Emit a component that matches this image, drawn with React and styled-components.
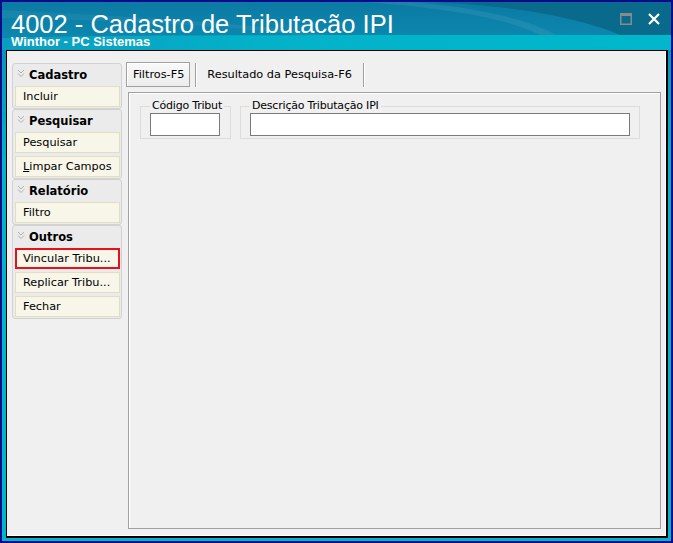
import React from "react"
import styled, { createGlobalStyle } from "styled-components"

const GlobalStyle = createGlobalStyle`
  html, body {
    margin: 0;
    padding: 0;
    background: #0a0a8c;
  }
  body {
    font-family: "DejaVu Sans", Verdana, sans-serif;
    font-size: 11px;
    color: #000;
  }
`

const groups = [
  { title: "Cadastro", items: [{ label: "Incluir" }] },
  {
    title: "Pesquisar",
    items: [{ label: "Pesquisar" }, { label: "Limpar Campos", accel: 0 }],
  },
  { title: "Relatório", items: [{ label: "Filtro" }] },
  {
    title: "Outros",
    items: [
      { label: "Vincular Tribu...", highlighted: true },
      { label: "Replicar Tribu..." },
      { label: "Fechar" },
    ],
  },
]

const Chevrons = () => (
  <svg width="8" height="9" viewBox="0 0 8 9">
    <polyline points="1,1 4,4 7,1" fill="none" stroke="#b0b0b0" strokeWidth="1" />
    <polyline points="1,4.5 4,7.5 7,4.5" fill="none" stroke="#b0b0b0" strokeWidth="1" />
  </svg>
)

const TitleArt = () => (
  <ArtSvg viewBox="0 0 669 48" preserveAspectRatio="none">
    <defs>
      <linearGradient id="base" x1="0" y1="0" x2="0" y2="1">
        <stop offset="0" stopColor="#0b7aa3" />
        <stop offset="1" stopColor="#0d8cb3" />
      </linearGradient>
      <linearGradient id="band" x1="0" y1="0" x2="1" y2="0">
        <stop offset="0" stopColor="#0a9dc0" />
        <stop offset="0.4" stopColor="#03b2c9" />
        <stop offset="1" stopColor="#00b7cb" />
      </linearGradient>
    </defs>
    <rect x="0" y="0" width="669" height="48" fill="url(#base)" />
    <path d="M430 0 C520 4 585 18 620 34 L669 34 L669 0 Z" fill="#0a6a8b" />
    <path d="M360 0 C450 6 510 18 540 34 L556 34 C525 16 470 5 410 0 Z" fill="#ffffff" opacity="0.07" />
    <path d="M0 8 C120 14 260 22 330 34 L300 34 C230 24 120 18 0 16 Z" fill="#ffffff" opacity="0.05" />
    <path d="M0 36 C90 33 200 33 669 33 L669 48 L0 48 Z" fill="url(#band)" />
  </ArtSvg>
)

const RestoreIcon = () => (
  <svg width="12" height="12" viewBox="0 0 12 12">
    <rect x="0.75" y="0.75" width="10.5" height="10.5" fill="none" stroke="#8a8a8a" strokeWidth="1.5" />
    <rect x="0" y="0" width="12" height="3" fill="#8a8a8a" />
  </svg>
)

const CloseIcon = () => (
  <svg width="12" height="12" viewBox="0 0 12 12">
    <path d="M1 1 L11 11 M11 1 L1 11" stroke="#ffffff" strokeWidth="2.2" />
  </svg>
)

const renderLabel = (item) => {
  if (item.accel === undefined) return item.label
  const i = item.accel
  return (
    <>
      {item.label.slice(0, i)}
      <u>{item.label[i]}</u>
      {item.label.slice(i + 1)}
    </>
  )
}

const App = () => {
  return (
    <>
      <GlobalStyle />
      <Window>
        <Frame>
          <TitleBar>
            <TitleArt />
            <TitleText>
              <Caption>4002 - Cadastro de Tributacão IPI</Caption>
              <SubCaption>Winthor - PC Sistemas</SubCaption>
            </TitleText>
            <Controls>
              <RestoreIcon />
              <CloseIcon />
            </Controls>
          </TitleBar>

          <Client>
            <Sidebar>
              {groups.map((group) => (
                <Group key={group.title}>
                  <GroupHeader>
                    <Chevrons />
                    <span>{group.title}</span>
                  </GroupHeader>
                  <GroupItems>
                    {group.items.map((item) => (
                      <ActionButton key={item.label} highlighted={item.highlighted}>
                        {renderLabel(item)}
                      </ActionButton>
                    ))}
                  </GroupItems>
                </Group>
              ))}
            </Sidebar>

            <Main>
              <TabBar>
                <Tab active>Filtros-F5</Tab>
                <TabDivider />
                <Tab>Resultado da Pesquisa-F6</Tab>
                <TabDivider />
              </TabBar>
              <TabPanel>
                <Field width={91}>
                  <legend>Código Tribut</legend>
                  <TextInput width={70} />
                </Field>
                <Field width={400}>
                  <legend>Descrição Tributação IPI</legend>
                  <TextInput width={380} />
                </Field>
              </TabPanel>
            </Main>
          </Client>
        </Frame>
      </Window>
    </>
  )
}

export default App

const Window = styled.div`
  width: 673px;
  height: 543px;
  box-sizing: border-box;
  padding: 2px;
  background: #0a0a8c;
  display: flex;
`

const Frame = styled.div`
  flex: 1;
  display: flex;
  flex-direction: column;
  background: linear-gradient(#0a88b0, #00b4c8 30%, #00b6ca);
`

const TitleBar = styled.div`
  position: relative;
  height: 48px;
  flex: none;
  display: flex;
  justify-content: space-between;
  overflow: hidden;
  color: #fff;
`

const ArtSvg = styled.svg`
  position: absolute;
  inset: 0;
  width: 100%;
  height: 100%;
`

const TitleText = styled.div`
  position: relative;
  padding: 12px 0 0 9px;
  font-family: "Liberation Sans", Arial, sans-serif;
`

const Caption = styled.div`
  font-size: 25.5px;
  line-height: 21px;
  white-space: nowrap;
`

const SubCaption = styled.div`
  font-size: 13px;
  font-weight: bold;
  line-height: 13px;
  white-space: nowrap;
`

const Controls = styled.div`
  position: relative;
  display: flex;
  gap: 16px;
  padding: 11px 11px 0 0;
`

const Client = styled.div`
  flex: 1;
  display: flex;
  gap: 4px;
  margin: 0 3px 3px 4px;
  padding: 11px 5px 7px 5px;
  background: #f0f0f0;
  border: 1px solid #000;
  border-right-width: 2px;
  border-bottom-width: 2px;
  box-shadow: inset -1px -1px 0 #fff;
`

const Sidebar = styled.div`
  width: 110px;
  flex: none;
  margin-top: 1px;
  display: flex;
  flex-direction: column;
`

const Group = styled.div`
  border: 1px solid #d2d2d2;
  border-radius: 3px;
  background: #ebebeb;
  padding: 0 1px 1px 2px;
`

const GroupHeader = styled.div`
  height: 22px;
  display: flex;
  align-items: center;
  gap: 4px;
  padding-left: 2px;
  font-weight: bold;
  font-size: 11.5px;

  > svg {
    margin-top: -3px;
  }
`

const GroupItems = styled.div`
  display: flex;
  flex-direction: column;
  gap: 3px;
`

const ActionButton = styled.div`
  height: 21px;
  box-sizing: border-box;
  display: flex;
  align-items: center;
  padding-left: ${(p) => (p.highlighted ? "6px" : "7px")};
  background: #f7f6e9;
  border: ${(p) => (p.highlighted ? "2px solid #e8101a" : "1px solid #e2dec2")};
  font-size: 11.3px;
  white-space: nowrap;
  overflow: hidden;
`

const Main = styled.div`
  flex: 1;
  display: flex;
  flex-direction: column;
`

const TabBar = styled.div`
  height: 25px;
  display: flex;
  align-items: stretch;
`

const Tab = styled.div`
  display: flex;
  align-items: center;
  box-sizing: border-box;
  padding: ${(p) => (p.active ? "0 5px 0 6px" : "0 5px 0 10px")};
  font-size: 11.3px;
  white-space: nowrap;
  border: 1px solid ${(p) => (p.active ? "#a0a0a0" : "transparent")};
  background: ${(p) => (p.active ? "linear-gradient(#f9f9f9, #ececec)" : "transparent")};
  box-shadow: ${(p) => (p.active ? "inset 1px 1px 0 #ffffff" : "none")};
`

const TabDivider = styled.div`
  width: 1px;
  margin: 1px 0 0 5px;
  background: #a0a0a0;
  box-shadow: 1px 0 0 #fff;
`

const TabPanel = styled.div`
  flex: 1;
  margin: 5px 0 0 2px;
  padding: 6px 0 0 11px;
  display: flex;
  align-items: flex-start;
  gap: 9px;
  border: 1px solid #a0a0a0;
  box-shadow: inset 1px 1px 0 #fff;
`

const Field = styled.fieldset`
  box-sizing: border-box;
  width: ${(p) => p.width}px;
  min-width: 0;
  margin: 0;
  padding: 0 9px 2px 9px;
  border: 1px solid #dcdcdc;

  > legend {
    padding: 0 2px;
    font-size: 11px;
    letter-spacing: -0.2px;
    line-height: 14px;
    white-space: nowrap;
  }
`

const TextInput = styled.div`
  width: ${(p) => p.width}px;
  height: 23px;
  box-sizing: border-box;
  background: #fff;
  border: 1px solid #7a7a7a;
`
